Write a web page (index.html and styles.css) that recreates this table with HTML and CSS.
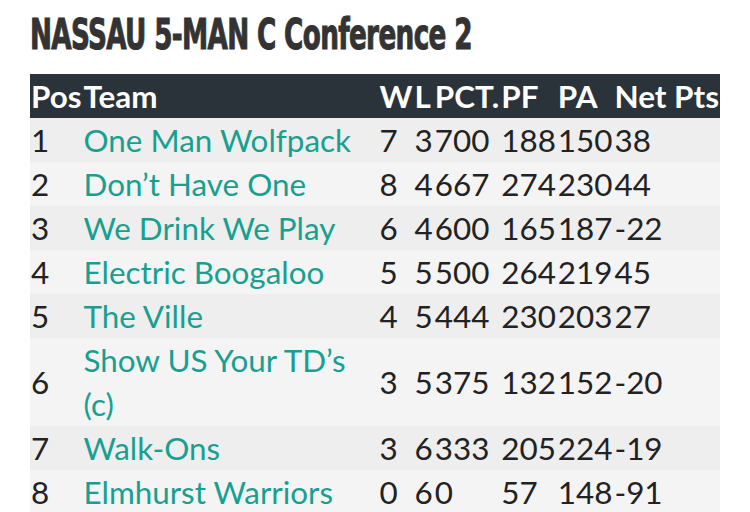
FILE: index.html
```html
<!DOCTYPE html>
<html>
<head>
<meta charset="utf-8">
<link rel="stylesheet" href="styles.css">
</head>
<body>
<div class="page">
  <h1 class="title"><span class="title-text">NASSAU 5-MAN C Conference 2</span></h1>
  <table class="standings">
    <thead>
      <tr><th>Pos</th><th>Team</th><th>W</th><th>L</th><th>PCT.</th><th>PF</th><th>PA</th><th>Net Pts</th></tr>
    </thead>
    <tbody>
      <tr><td>1</td><td><a class="team" href="#">One Man Wolfpack</a></td><td>7</td><td>3</td><td>700</td><td>188</td><td>150</td><td>38</td></tr>
      <tr><td>2</td><td><a class="team" href="#">Don’t Have One</a></td><td>8</td><td>4</td><td>667</td><td>274</td><td>230</td><td>44</td></tr>
      <tr><td>3</td><td><a class="team" href="#">We Drink We Play</a></td><td>6</td><td>4</td><td>600</td><td>165</td><td>187</td><td>-22</td></tr>
      <tr><td>4</td><td><a class="team" href="#">Electric Boogaloo</a></td><td>5</td><td>5</td><td>500</td><td>264</td><td>219</td><td>45</td></tr>
      <tr><td>5</td><td><a class="team" href="#">The Ville</a></td><td>4</td><td>5</td><td>444</td><td>230</td><td>203</td><td>27</td></tr>
      <tr><td>6</td><td><a class="team" href="#">Show US Your TD’s (c)</a></td><td>3</td><td>5</td><td>375</td><td>132</td><td>152</td><td>-20</td></tr>
      <tr><td>7</td><td><a class="team" href="#">Walk-Ons</a></td><td>3</td><td>6</td><td>333</td><td>205</td><td>224</td><td>-19</td></tr>
      <tr><td>8</td><td><a class="team" href="#">Elmhurst Warriors</a></td><td>0</td><td>6</td><td>0</td><td>57</td><td>148</td><td>-91</td></tr>
    </tbody>
  </table>
</div>
</body>
</html>
```
FILE: styles.css
```css
html, body {
  margin: 0;
  padding: 0;
  background: #ffffff;
}
.page {
  padding: 0 30px;
  font-family: Lato, "Open Sans", sans-serif;
  color: #222222;
}
.title {
  margin: 0;
  height: 74px;
  padding-top: 8px;
  box-sizing: border-box;
  font-family: "Liberation Sans Narrow", "DejaVu Sans Condensed", sans-serif;
  font-weight: 700;
  font-size: 43px;
  line-height: 52px;
  letter-spacing: -1px;
  color: #333333;
  white-space: nowrap;
}
.title-text {
  display: inline-block;
  transform: scaleX(0.68);
  transform-origin: left center;
  -webkit-text-stroke: 1px #333333;
}
.standings {
  width: 690px;
  border-collapse: collapse;
  border-spacing: 0;
  font-size: 31.4px;
  line-height: 44px;
}
.standings th,
.standings td {
  padding: 0 1px;
  text-align: left;
  vertical-align: middle;
}
.standings thead tr {
  background: #2b333a;
  color: #ffffff;
}
.standings th {
  font-weight: 700;
  white-space: nowrap;
}
.standings tbody tr:nth-child(odd) {
  background: #eeeeee;
}
.standings tbody tr:nth-child(even) {
  background: #f4f4f4;
}
.team {
  color: #17a090;
  text-decoration: none;
}
```
